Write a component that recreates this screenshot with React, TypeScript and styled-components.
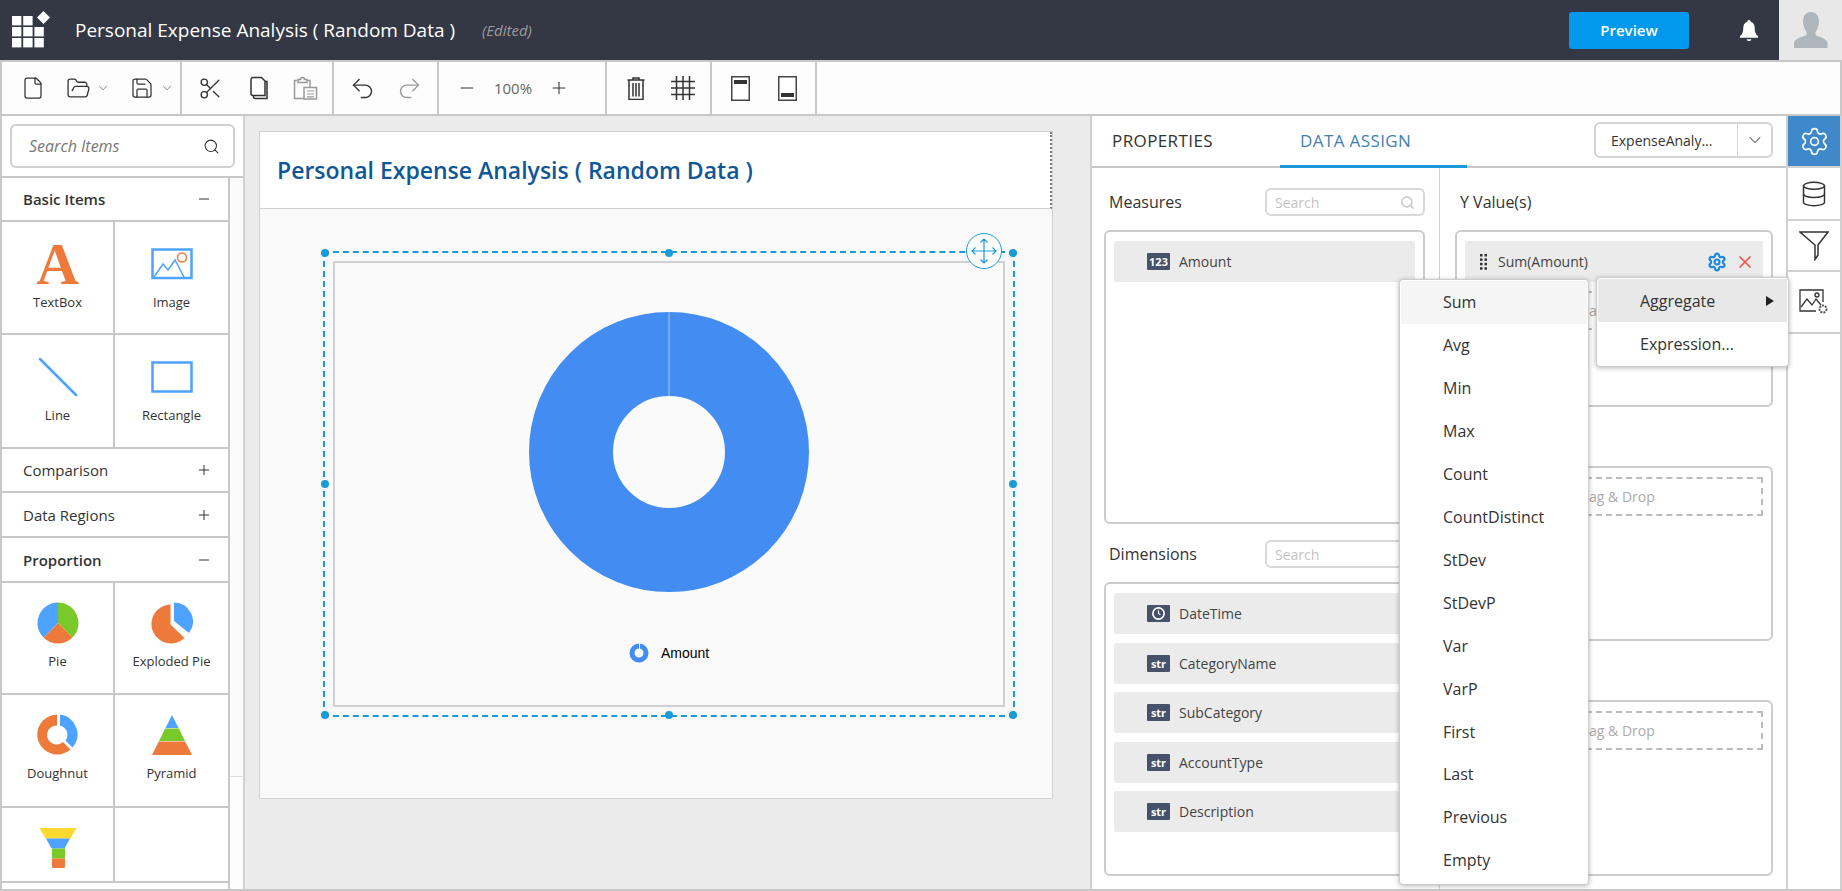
import React from 'react';
import styled, {createGlobalStyle} from 'styled-components';
import {ChevronDown, Database, FolderOpen, Redo2, Save, Scissors, Search, Settings, Undo2, X, File, Minus, Plus} from 'lucide-react';

const measures = [{badge: '123', name: 'Amount'}];
const dimensions = [
  {badge: 'clock', name: 'DateTime'},
  {badge: 'str', name: 'CategoryName'},
  {badge: 'str', name: 'SubCategory'},
  {badge: 'str', name: 'AccountType'},
  {badge: 'str', name: 'Description'},
];
const aggregates = ['Sum', 'Avg', 'Min', 'Max', 'Count', 'CountDistinct', 'StDev', 'StDevP', 'Var', 'VarP', 'First', 'Last', 'Previous', 'Empty'];

function Logo() {
  const squares = [[0, 0], [1, 0], [0, 1], [1, 1], [2, 1], [0, 2], [1, 2], [2, 2]];
  return (
    <LogoSvg viewBox="0 0 40 38" width="40" height="38">
      {squares.map(([c, r]) => <rect key={`${c}${r}`} x={c * 11.2} y={5 + r * 11} width="9.4" height="9.4" fill="#fff" />)}
      <polygon points="31.5,0 38,6.5 31.5,13 25,6.5" fill="#fff" />
    </LogoSvg>
  );
}

function Bell() {
  return (
    <svg viewBox="0 0 20 24" width="20" height="23">
      <path d="M10 1c1.2 0 1.8.8 1.8 1.9C15 3.800 16 6.500 16 10c0 4 1 6 3.500 8v1.500H.5V18C3 16 4 14 4 10c0-3.500 1-6.200 4.200-7.100C8.200 1.800 8.800 1 10 1z" fill="#fff" />
      <path d="M7.500 21h5c-.4 1.300-1.300 2-2.500 2s-2.100-.7-2.500-2z" fill="#fff" />
    </svg>
  );
}

function Person() {
  return (
    <svg viewBox="0 0 34 36" width="34" height="36">
      <path d="M17 0c5 0 8 4 8 9.500 0 4-1.500 8-3.500 10.500v3c3 2 12 3 12 8.500V36H0v-4.500c0-5.500 9-6.500 12.500-8.500v-3C10.500 17.500 9 13.500 9 9.500 9 4 12 0 17 0z" fill="#aeb6bb" />
    </svg>
  );
}

function CopyIcon() {
  return (
    <ToolSvg viewBox="0 0 20 24" width="20" height="24" $left={0}>
      <path d="M5 1.500h8.500L17 5v14.500H5a2 2 0 0 1-2-2v-14a2 2 0 0 1 2-2z" fill="#fff" stroke="#333" strokeWidth="1.500" />
      <path d="M17 5.500h2v17H7.500a2 2 0 0 1-2-2v-1" fill="none" stroke="#333" strokeWidth="1.500" />
    </ToolSvg>
  );
}

function PasteIcon() {
  return (
    <ToolSvg viewBox="0 0 25 24" width="25" height="24" $left={25}>
      <path d="M4 4.500H1.500v18H11M17 11V4.500h-2.500" fill="none" stroke="#999" strokeWidth="1.500" />
      <path d="M5 6.500h9V3.500h-2.500a2 2 0 0 0-4 0H5z" fill="none" stroke="#999" strokeWidth="1.500" />
      <rect x="11" y="11.500" width="12.500" height="11.500" fill="#fff" stroke="#999" strokeWidth="1.500" />
      <path d="M14 15h7M14 18h7M14 20.800h7" stroke="#999" strokeWidth="1.200" />
    </ToolSvg>
  );
}

function TrashIcon() {
  return (
    <ToolSvg viewBox="0 0 18 24" width="18" height="24" $left={20}>
      <path d="M6 3.500V2h6v1.500M.5 4h17M2 4.500v19h14v-19" fill="none" stroke="#333" strokeWidth="1.500" />
      <path d="M6 7v13.500M9 7v13.500M12 7v13.500" stroke="#333" strokeWidth="1.500" />
    </ToolSvg>
  );
}

function GridIcon() {
  return (
    <ToolSvg viewBox="0 0 24 24" width="24" height="24" $left={26}>
      <path d="M5.500 0v24M12 0v24M18.500 0v24M0 5.500h24M0 12h24M0 18.500h24" stroke="#333" strokeWidth="1.500" />
    </ToolSvg>
  );
}

function BandIcon({$top, left}: {$top: boolean; left: number}) {
  return (
    <ToolSvg viewBox="0 0 19 25" width="19" height="25" $left={left}>
      <rect x=".75" y=".75" width="17.500" height="23.500" fill="#fff" stroke="#444" strokeWidth="1.500" />
      <rect x="3" y={$top ? 4 : 17} width="13" height="4" fill="#333" />
    </ToolSvg>
  );
}

function Toolbar() {
  const stroke = {stroke: '#333', strokeWidth: 1.25};
  return (
    <ToolRow>
      <ToolGroup $width={180} $pad={21}>
        <File size={24} {...stroke} style={{margin: '0 -2px'}} />
        <ToolWrap $left={23}><FolderOpen size={25} {...stroke} /></ToolWrap>
        <ToolWrap $left={5}><ChevronDown size={14} color="#555" strokeWidth={1.25} /></ToolWrap>
        <ToolWrap $left={20}><Save size={24} {...stroke} /></ToolWrap>
        <ToolWrap $left={6}><ChevronDown size={14} color="#555" strokeWidth={1.25} /></ToolWrap>
      </ToolGroup>
      <ToolGroup $width={152} $pad={16}>
        <Scissors size={25} {...stroke} />
        <ToolWrap $left={25}><CopyIcon /></ToolWrap>
        <PasteIcon />
      </ToolGroup>
      <ToolGroup $width={105} $pad={15}>
        <Undo2 size={27} {...stroke} />
        <ToolWrap $left={20}><Redo2 size={27} stroke="#999" strokeWidth={1.25} /></ToolWrap>
      </ToolGroup>
      <ToolGroup $width={168} $pad={18}>
        <Minus size={20} {...stroke} />
        <ZoomText>100%</ZoomText>
        <Plus size={20} {...stroke} />
      </ToolGroup>
      <ToolGroup $width={105} $pad={0}>
        <TrashIcon />
        <GridIcon />
      </ToolGroup>
      <ToolGroup $width={105} $pad={0}>
        <BandIcon $top left={19} />
        <BandIcon $top={false} left={28} />
      </ToolGroup>
    </ToolRow>
  );
}

function PieIcon() {
  return (
    <svg viewBox="0 0 42 42" width="42" height="42">
      <path d="M21 21V.5A20.500 20.500 0 0 1 35.500 35.500z" fill="#7ac92a" />
      <path d="M21 21l14.500 14.500A20.500 20.500 0 0 1 6.500 35.500z" fill="#ed7a3a" />
      <path d="M21 21L6.500 35.500A20.500 20.500 0 0 1 21 .5z" fill="#4da3ff" />
    </svg>
  );
}

function ExplodedPieIcon() {
  return (
    <svg viewBox="0 0 42 42" width="42" height="42">
      <path d="M19.500 2.500v20l14 13.500A19.500 19.500 0 1 1 19.500 2.500z" fill="#ed7a3a" />
      <path d="M23 .5a19 19 0 0 1 15 30.500L23 19z" fill="#4da3ff" />
    </svg>
  );
}

function DoughnutIcon() {
  return (
    <svg viewBox="0 0 42 42" width="42" height="42">
      <path d="M20 .5v11a9.500 9.500 0 1 0 6 16.500l7.500 7.500A20 20 0 1 1 20 .5z" fill="#ed7a3a" />
      <path d="M23 .5a20 20 0 0 1 12.500 33l-7-7A9.500 9.500 0 0 0 23 11.500z" fill="#4da3ff" />
    </svg>
  );
}

function PyramidIcon() {
  return (
    <svg viewBox="0 0 42 42" width="42" height="42">
      <polygon points="21,1 27.500,14 14.500,14" fill="#4da3ff" />
      <polygon points="14.200,14.500 27.800,14.500 34,27 8,27" fill="#7ac92a" />
      <polygon points="7.800,27.500 34.200,27.500 41,41 1,41" fill="#ed7a3a" />
    </svg>
  );
}

function FunnelChartIcon() {
  return (
    <svg viewBox="0 0 40 42" width="40" height="42">
      <path d="M1.500 1h37l-6 10.500H7.500z" fill="#ffd92f" />
      <polygon points="8,11.500 32,11.500 26.500,21.500 13.500,21.500" fill="#4da3ff" />
      <rect x="14" y="21.500" width="13" height="10" fill="#7ac92a" />
      <path d="M14 31.500h13v8a1.500 1.500 0 0 1-1.500 1.500h-10a1.500 1.500 0 0 1-1.500-1.500z" fill="#ed7a3a" />
    </svg>
  );
}

function ImageIcon() {
  return (
    <svg viewBox="0 0 42 32" width="42" height="32">
      <rect x="1.500" y="1.500" width="39" height="28.500" fill="none" stroke="#4da3ff" strokeWidth="2.500" />
      <path d="M3 29l9-13 5 6 7-10 9 17" fill="none" stroke="#4da3ff" strokeWidth="1.500" />
      <circle cx="31" cy="9.500" r="4.500" fill="none" stroke="#ed7a3a" strokeWidth="1.500" />
    </svg>
  );
}

function LineIcon() {
  return (
    <svg viewBox="0 0 40 40" width="40" height="40">
      <line x1="2" y1="2" x2="38" y2="38" stroke="#4da3ff" strokeWidth="2.500" strokeLinecap="round" />
    </svg>
  );
}

function RectangleIcon() {
  return (
    <svg viewBox="0 0 42 32" width="42" height="32">
      <rect x="1.500" y="1.500" width="39" height="29" fill="none" stroke="#4da3ff" strokeWidth="2.500" />
    </svg>
  );
}

function LeftPanel() {
  return (
    <LeftColumn>
      <SearchArea>
        <SearchBox>
          <SearchHint>Search Items</SearchHint>
          <Search size={17} color="#333" strokeWidth={1.5} />
        </SearchBox>
      </SearchArea>
      <ListRow>
        <ItemList>
          <GroupRow $bold $height={44}>Basic Items<Minus size={16} color="#333" strokeWidth={1.5} /></GroupRow>
          <ItemGrid>
            <ItemCell $height={111}><IconSlot><LetterIcon>A</LetterIcon></IconSlot><ItemName>TextBox</ItemName></ItemCell>
            <ItemCell $height={111} $last><IconSlot><ImageIcon /></IconSlot><ItemName>Image</ItemName></ItemCell>
            <ItemCell $height={112}><IconSlot><LineIcon /></IconSlot><ItemName>Line</ItemName></ItemCell>
            <ItemCell $height={112} $last><IconSlot><RectangleIcon /></IconSlot><ItemName>Rectangle</ItemName></ItemCell>
          </ItemGrid>
          <GroupRow $height={44}>Comparison<Plus size={16} color="#333" strokeWidth={1.5} /></GroupRow>
          <GroupRow $height={45}>Data Regions<Plus size={16} color="#333" strokeWidth={1.5} /></GroupRow>
          <GroupRow $bold $height={45}>Proportion<Minus size={16} color="#333" strokeWidth={1.5} /></GroupRow>
          <ItemGrid>
            <ItemCell $height={110} $top={19}><IconSlot><PieIcon /></IconSlot><ItemName>Pie</ItemName></ItemCell>
            <ItemCell $height={110} $last $top={19}><IconSlot><ExplodedPieIcon /></IconSlot><ItemName>Exploded Pie</ItemName></ItemCell>
            <ItemCell $height={111} $top={19}><IconSlot><DoughnutIcon /></IconSlot><ItemName>Doughnut</ItemName></ItemCell>
            <ItemCell $height={111} $last $top={19}><IconSlot><PyramidIcon /></IconSlot><ItemName>Pyramid</ItemName></ItemCell>
            <ItemCell $height={73} $top={19}><IconSlot><FunnelChartIcon /></IconSlot></ItemCell>
            <ItemCell $height={73} $last />
          </ItemGrid>
        </ItemList>
        <ScrollTrack><ScrollThumb /></ScrollTrack>
      </ListRow>
    </LeftColumn>
  );
}

function Canvas() {
  return (
    <CanvasArea>
      <ReportPage>
        <ReportHead>
          <ReportTitle>Personal Expense Analysis ( Random Data )</ReportTitle>
        </ReportHead>
        <ReportBody>
          <Selection>
            <Handle $x="0%" $y="0%" /><Handle $x="50%" $y="0%" /><Handle $x="100%" $y="0%" />
            <Handle $x="0%" $y="50%" /><Handle $x="100%" $y="50%" />
            <Handle $x="0%" $y="100%" /><Handle $x="50%" $y="100%" /><Handle $x="100%" $y="100%" />
            <MoveButton>
              <svg viewBox="0 0 26 26" width="26" height="26" fill="none" stroke="#1a9bd7" strokeWidth="1.200">
                <path d="M13 1v24M1 13h24M9.500 4.500L13 1l3.500 3.500M9.500 21.500L13 25l3.500-3.500M4.500 9.500L1 13l3.500 3.500M21.500 9.500L25 13l-3.500 3.500" />
              </svg>
            </MoveButton>
            <ChartFrame>
              <svg viewBox="0 0 280 280" width="280" height="280">
                <circle cx="140" cy="140" r="98" fill="none" stroke="#438cf1" strokeWidth="84" />
                <line x1="140" y1="0" x2="140" y2="84" stroke="#a9c9f5" strokeWidth="1" />
              </svg>
              <Legend>
                <svg viewBox="0 0 20 20" width="20" height="20">
                  <circle cx="10" cy="10" r="7" fill="none" stroke="#438cf1" strokeWidth="5" />
                  <line x1="10.500" y1="0" x2="10.500" y2="6" stroke="#fafafa" strokeWidth="1" />
                </svg>
                <LegendText>Amount</LegendText>
              </Legend>
            </ChartFrame>
          </Selection>
        </ReportBody>
      </ReportPage>
    </CanvasArea>
  );
}

function FieldBadge({kind}: {kind: string}) {
  return (
    <Badge>
      {kind === 'clock' ? (
        <svg viewBox="0 0 16 16" width="15" height="15" fill="none" stroke="#fff" strokeWidth="1.800">
          <circle cx="8" cy="8" r="6" />
          <path d="M8 4.500V8l2 1.500" strokeWidth="1.200" />
        </svg>
      ) : kind}
    </Badge>
  );
}

function RightPanel() {
  return (
    <PropsPanel>
      <TabStrip>
        <Tab $width={188} $pad={20}>PROPERTIES</Tab>
        <Tab $width={187} $pad={20} $active>DATA ASSIGN</Tab>
        <ItemSelect>
          <SelectText>ExpenseAnaly...</SelectText>
          <SelectArrow><ChevronDown size={20} color="#555" strokeWidth={1.25} /></SelectArrow>
        </ItemSelect>
      </TabStrip>
      <Columns>
        <FieldColumn>
          <HeadRow>
            <HeadTitle>Measures</HeadTitle>
            <FieldSearch><span>Search</span><Search size={15} color="#ccc" strokeWidth={2.5} /></FieldSearch>
          </HeadRow>
          <FieldBox $height={294}>
            {measures.map(m => (
              <FieldRow key={m.name}><FieldBadge kind={m.badge} /><FieldName>{m.name}</FieldName></FieldRow>
            ))}
          </FieldBox>
          <HeadRow $gap={16}>
            <HeadTitle>Dimensions</HeadTitle>
            <FieldSearch><span>Search</span><Search size={15} color="#ccc" strokeWidth={2.5} /></FieldSearch>
          </HeadRow>
          <FieldBox $height={294}>
            {dimensions.map(d => (
              <FieldRow key={d.name}><FieldBadge kind={d.badge} /><FieldName>{d.name}</FieldName></FieldRow>
            ))}
          </FieldBox>
        </FieldColumn>
        <AssignColumn>
          <HeadRow><HeadTitle>Y Value(s)</HeadTitle></HeadRow>
          <FieldBox $height={177}>
            <AssignedRow>
              <GripDots>
                <svg viewBox="0 0 7 16" width="7" height="16" fill="#333">
                  {[0, 1, 2, 3].map(r => <React.Fragment key={r}><rect x="0" y={r * 4.400} width="2.500" height="2.500" /><rect x="4.500" y={r * 4.400} width="2.500" height="2.500" /></React.Fragment>)}
                </svg>
              </GripDots>
              <FieldName>Sum(Amount)</FieldName>
              <RowActions>
                <Settings size={20} color="#1e88e5" strokeWidth={2.6} />
                <X size={20} color="#ef5350" strokeWidth={2} />
              </RowActions>
            </AssignedRow>
            <DropZone>Drag &amp; Drop</DropZone>
          </FieldBox>
          <FieldBox $height={175} $top={59}><DropZone>Drag &amp; Drop</DropZone></FieldBox>
          <FieldBox $height={176} $top={59}><DropZone>Drag &amp; Drop</DropZone></FieldBox>
        </AssignColumn>
      </Columns>
    </PropsPanel>
  );
}

function SideRail() {
  return (
    <Rail>
      <RailItem $height={52} $active><Settings size={31} color="#fff" strokeWidth={1.25} /></RailItem>
      <RailItem $height={53}><Database size={28} color="#333" strokeWidth={1.25} /></RailItem>
      <RailItem $height={51}>
        <svg viewBox="0 0 30 30" width="30" height="30" fill="none" stroke="#333" strokeWidth="1.500">
          <path d="M1 1h28L19 14v10l-3 4.500V14z" />
        </svg>
      </RailItem>
      <RailItem $height={62}>
        <svg viewBox="0 0 30 26" width="30" height="26" fill="none" stroke="#333" strokeWidth="1.300">
          <path d="M24 13V1H1v21h16" />
          <path d="M2 18l6-8 5 6 4-6 5 6" />
          <circle cx="18" cy="6" r="2" />
          <circle cx="24" cy="20" r="3.500" stroke="#555" strokeWidth="2" strokeDasharray="2 1" />
        </svg>
      </RailItem>
    </Rail>
  );
}

export default function App() {
  return (
    <Page>
      <GlobalStyle />
      <TopBar>
        <Logo />
        <AppTitle>Personal Expense Analysis ( Random Data )</AppTitle>
        <EditedTag>(Edited)</EditedTag>
        <PreviewButton>Preview</PreviewButton>
        <BellWrap><Bell /></BellWrap>
        <Avatar><Person /></Avatar>
      </TopBar>
      <Toolbar />
      <Workspace>
        <LeftPanel />
        <Canvas />
        <RightPanel />
        <SideRail />
      </Workspace>
      <AggregateMenu>
        {aggregates.map((a, i) => <MenuItem key={a} $hover={i === 0}>{a}</MenuItem>)}
      </AggregateMenu>
      <SubMenu>
        <SubItem $hover>Aggregate<SubArrow /></SubItem>
        <SubItem>Expression...</SubItem>
      </SubMenu>
    </Page>
  );
}

const GlobalStyle = createGlobalStyle`
  html, body {
    margin: 0;
    padding: 0;
    background: #fff;
    overflow: hidden;
  }
  * {
    box-sizing: border-box;
  }
`

const Page = styled.div`
  position: relative;
  width: 1842px;
  height: 891px;
  display: flex;
  flex-direction: column;
  overflow: hidden;
  font-family: "Open Sans", "Noto Sans", sans-serif;
  color: #333;
  background: #fff;
`

const TopBar = styled.header`
  height: 62px;
  flex: none;
  display: flex;
  align-items: center;
  background: #343844;
  border-bottom: 2px solid #c8c8c8;
  padding-left: 12px;
`

const LogoSvg = styled.svg`
  flex: none;
  margin-top: -1px;
`

const AppTitle = styled.div`
  margin-left: 23px;
  font-size: 19px;
  color: #fff;
`

const EditedTag = styled.div`
  margin-left: 27px;
  font-size: 15px;
  font-style: italic;
  color: #9b9b9b;
`

const PreviewButton = styled.div`
  margin-left: auto;
  width: 120px;
  height: 37px;
  display: flex;
  align-items: center;
  justify-content: center;
  border-radius: 3px;
  background: #0099ee;
  color: #fff;
  font-size: 15px;
  font-weight: 600;
`

const BellWrap = styled.div`
  margin-left: 50px;
  display: flex;
`

const Avatar = styled.div`
  margin-left: 20px;
  width: 63px;
  height: 60px;
  display: flex;
  align-items: flex-end;
  justify-content: center;
  padding-bottom: 12px;
  background: #e8e8e8;
`

const ToolRow = styled.div`
  height: 54px;
  flex: none;
  display: flex;
  background: #fdfdfd;
  border-left: 2px solid #c8c8c8;
  border-right: 2px solid #c8c8c8;
  border-bottom: 2px solid #c8c8c8;
`

const ToolGroup = styled.div<{$width: number; $pad: number}>`
  width: ${p => p.$width}px;
  flex: none;
  display: flex;
  align-items: center;
  padding-left: ${p => p.$pad}px;
  border-right: 2px solid #c8c8c8;
`

const ToolWrap = styled.div<{$left: number}>`
  display: flex;
  margin-left: ${p => p.$left}px;
`

const ToolSvg = styled.svg<{$left: number}>`
  display: block;
  flex: none;
  margin-left: ${p => p.$left}px;
`

const ZoomText = styled.div`
  width: 72px;
  text-align: center;
  font-size: 15px;
  color: #666;
`

const Workspace = styled.main`
  flex: 1;
  min-height: 0;
  display: flex;
  border-left: 2px solid #c8c8c8;
  border-bottom: 2px solid #c8c8c8;
`

const LeftColumn = styled.aside`
  width: 243px;
  flex: none;
  display: flex;
  flex-direction: column;
  border-right: 2px solid #d2d2d2;
`

const SearchArea = styled.div`
  height: 62px;
  flex: none;
  padding: 8px 8px 0 8px;
  border-bottom: 2px solid #c8c8c8;
`

const SearchBox = styled.div`
  height: 44px;
  display: flex;
  align-items: center;
  justify-content: space-between;
  padding: 0 13px 0 17px;
  border: 2px solid #d0d0d0;
  border-radius: 6px;
`

const SearchHint = styled.span`
  font-size: 16px;
  font-style: italic;
  color: #777;
`

const ListRow = styled.div`
  flex: 1;
  min-height: 0;
  display: flex;
`

const ItemList = styled.div`
  width: 228px;
  flex: none;
  border-right: 2px solid #c8c8c8;
`

const GroupRow = styled.div<{$bold?: boolean; $height: number}>`
  height: ${p => p.$height}px;
  display: flex;
  align-items: center;
  justify-content: space-between;
  padding: 0 16px 0 21px;
  font-size: 15px;
  font-weight: ${p => (p.$bold ? 600 : 400)};
  color: #333;
  border-bottom: 2px solid #c8c8c8;
`

const ItemGrid = styled.div`
  display: grid;
  grid-template-columns: 113px 113px;
`

const ItemCell = styled.div<{$height: number; $last?: boolean; $top?: number}>`
  height: ${p => p.$height + 2}px;
  display: flex;
  flex-direction: column;
  align-items: center;
  padding-top: ${p => p.$top ?? 21}px;
  overflow: hidden;
  border-bottom: 2px solid #c8c8c8;
  border-right: ${p => (p.$last ? 'none' : '2px solid #c8c8c8')};
`

const IconSlot = styled.div`
  height: 42px;
  flex: none;
  display: flex;
  align-items: center;
  justify-content: center;
`

const LetterIcon = styled.span`
  font-family: "Liberation Serif", serif;
  font-size: 59px;
  font-weight: 700;
  line-height: 42px;
  color: #ed7a3a;
`

const ItemName = styled.div`
  margin-top: 7px;
  font-size: 13px;
  line-height: 20px;
  color: #333;
`

const ScrollTrack = styled.div`
  flex: 1;
  background: #fdfdfd;
`

const ScrollThumb = styled.div`
  height: 599px;
  background: #fbfbfb;
  border-bottom: 1px solid #ddd;
`

const CanvasArea = styled.section`
  width: 845px;
  flex: none;
  padding: 15px 0 0 14px;
  background: #ebebeb;
`

const ReportPage = styled.div`
  width: 794px;
  height: 668px;
  display: flex;
  flex-direction: column;
  border: 1px solid #d0d0d0;
  background: #f9f9f9;
`

const ReportHead = styled.div`
  height: 77px;
  flex: none;
  display: flex;
  align-items: center;
  padding-left: 17px;
  background: #fff;
  border-bottom: 1px solid #d0d0d0;
  border-right: 2px dotted #777;
`

const ReportTitle = styled.h1`
  margin: 0;
  font-size: 23px;
  font-weight: 600;
  color: #0f5797;
`

const ReportBody = styled.div`
  flex: 1;
  padding: 42px 0 0 63px;
`

const Selection = styled.div`
  position: relative;
  width: 692px;
  height: 466px;
  padding: 8px;
  border: 2px dashed #1a9bd7;
`

const Handle = styled.span<{$x: string; $y: string}>`
  position: absolute;
  left: ${p => p.$x};
  top: ${p => p.$y};
  width: 8px;
  height: 8px;
  margin: -4px 0 0 -4px;
  border-radius: 50%;
  background: #1a9bd7;
`

const MoveButton = styled.div`
  position: absolute;
  right: 11px;
  top: -20px;
  width: 36px;
  height: 36px;
  display: flex;
  align-items: center;
  justify-content: center;
  border: 1.5px solid #1a9bd7;
  border-radius: 50%;
  background: #fff;
  z-index: 1;
`

const ChartFrame = styled.div`
  height: 100%;
  display: flex;
  flex-direction: column;
  align-items: center;
  padding-top: 49px;
  border: 2px solid #d0d0d0;
  background: #fafafa;
`

const Legend = styled.div`
  margin-top: 51px;
  display: flex;
  align-items: center;
  gap: 12px;
`

const LegendText = styled.span`
  font-family: "Liberation Sans", Arial, sans-serif;
  font-size: 14px;
  color: #000;
`

const PropsPanel = styled.section`
  width: 696px;
  flex: none;
  display: flex;
  flex-direction: column;
  border-left: 2px solid #d0d0d0;
`

const TabStrip = styled.div`
  height: 52px;
  flex: none;
  display: flex;
  border-bottom: 2px solid #c8c8c8;
`

const Tab = styled.div<{$width: number; $pad: number; $active?: boolean}>`
  width: ${p => p.$width}px;
  height: 52px;
  flex: none;
  display: flex;
  align-items: center;
  padding-left: ${p => p.$pad}px;
  font-size: 17px;
  font-weight: 500;
  letter-spacing: .4px;
  color: ${p => (p.$active ? '#3f7fb5' : '#333')};
  border-bottom: 3px solid ${p => (p.$active ? '#1a98d8' : 'transparent')};
`

const ItemSelect = styled.div`
  margin: 6px 13px 0 auto;
  width: 179px;
  height: 36px;
  display: flex;
  border: 2px solid #d4d4d4;
  border-radius: 6px;
`

const SelectText = styled.div`
  flex: 1;
  display: flex;
  align-items: center;
  padding-left: 15px;
  font-size: 14px;
  white-space: nowrap;
`

const SelectArrow = styled.div`
  width: 34px;
  flex: none;
  display: flex;
  align-items: center;
  justify-content: center;
  border-left: 1px solid #d4d4d4;
`

const Columns = styled.div`
  flex: 1;
  min-height: 0;
  display: flex;
`

const FieldColumn = styled.div`
  width: 348px;
  flex: none;
  padding: 20px 14px 0 12px;
  border-right: 1px solid #d0d0d0;
`

const AssignColumn = styled.div`
  flex: 1;
  padding: 20px 13px 0 15px;
`

const HeadRow = styled.div<{$gap?: number}>`
  height: 28px;
  margin-top: ${p => p.$gap ?? 0}px;
  margin-bottom: 14px;
  display: flex;
  align-items: center;
  justify-content: space-between;
`

const HeadTitle = styled.div`
  margin-left: 5px;
  font-size: 16px;
  font-weight: 500;
  color: #333;
`

const FieldSearch = styled.div`
  width: 160px;
  height: 28px;
  display: flex;
  align-items: center;
  justify-content: space-between;
  padding: 0 8px;
  border: 2px solid #d8d8d8;
  border-radius: 6px;
  font-size: 14px;
  color: #c4c4c4;
`

const FieldBox = styled.div<{$height: number; $top?: number}>`
  height: ${p => p.$height}px;
  margin-top: ${p => p.$top ?? 0}px;
  display: flex;
  flex-direction: column;
  gap: 8.5px;
  padding: 9px 8px;
  border: 2px solid #ccc;
  border-radius: 6px;
`

const FieldRow = styled.div`
  height: 41px;
  flex: none;
  display: flex;
  align-items: center;
  padding-left: 33px;
  gap: 9px;
  background: #ebebeb;
  border-radius: 2px;
`

const AssignedRow = styled(FieldRow)`
  padding: 0 8px 0 15px;
  gap: 11px;
`

const GripDots = styled.div`
  display: flex;
`

const RowActions = styled.div`
  margin-left: auto;
  display: flex;
  align-items: center;
  gap: 8px;
`

const Badge = styled.div`
  width: 23px;
  height: 17px;
  flex: none;
  display: flex;
  align-items: center;
  justify-content: center;
  border-radius: 1px;
  background: #46526b;
  color: #fff;
  font-size: 11px;
  font-weight: 700;
`

const FieldName = styled.span`
  font-size: 14px;
  color: #444;
`

const DropZone = styled.div`
  height: 39px;
  flex: none;
  display: flex;
  align-items: center;
  justify-content: center;
  border: 2px dashed #bbb;
  font-size: 14px;
  color: #aaa;
`

const Rail = styled.nav`
  flex: 1;
  display: flex;
  flex-direction: column;
  border-left: 2px solid #d0d0d0;
  border-right: 2px solid #d0d0d0;
`

const RailItem = styled.div<{$height: number; $active?: boolean}>`
  height: ${p => p.$height}px;
  flex: none;
  display: flex;
  align-items: center;
  justify-content: center;
  background: ${p => (p.$active ? '#3f88c9' : '#fff')};
  border-bottom: 2px solid #d0d0d0;
`

const AggregateMenu = styled.ul`
  position: absolute;
  left: 1399px;
  top: 279px;
  width: 190px;
  height: 606px;
  margin: 0;
  padding: 1px;
  list-style: none;
  background: #fff;
  border: 1px solid #ccc;
  border-radius: 4px;
  box-shadow: 0 1px 5px rgba(0, 0, 0, .3);
  z-index: 5;
`

const MenuItem = styled.li<{$hover?: boolean}>`
  height: 42.92px;
  display: flex;
  align-items: center;
  padding-left: 42px;
  font-size: 16px;
  color: #333;
  background: ${p => (p.$hover ? '#f5f5f5' : 'transparent')};
`

const SubMenu = styled.ul`
  position: absolute;
  left: 1596px;
  top: 277px;
  width: 193px;
  height: 90px;
  margin: 0;
  padding: 1px;
  list-style: none;
  background: #fff;
  border: 1px solid #ccc;
  border-radius: 4px;
  box-shadow: 0 1px 5px rgba(0, 0, 0, .3);
  z-index: 6;
`

const SubItem = styled.li<{$hover?: boolean}>`
  height: 43px;
  display: flex;
  align-items: center;
  padding: 0 13px 0 42px;
  justify-content: space-between;
  font-size: 16px;
  color: #333;
  background: ${p => (p.$hover ? '#e8e8e8' : 'transparent')};
`

const SubArrow = styled.span`
  width: 0;
  height: 0;
  border-left: 8px solid #222;
  border-top: 5.500px solid transparent;
  border-bottom: 5.500px solid transparent;
`
